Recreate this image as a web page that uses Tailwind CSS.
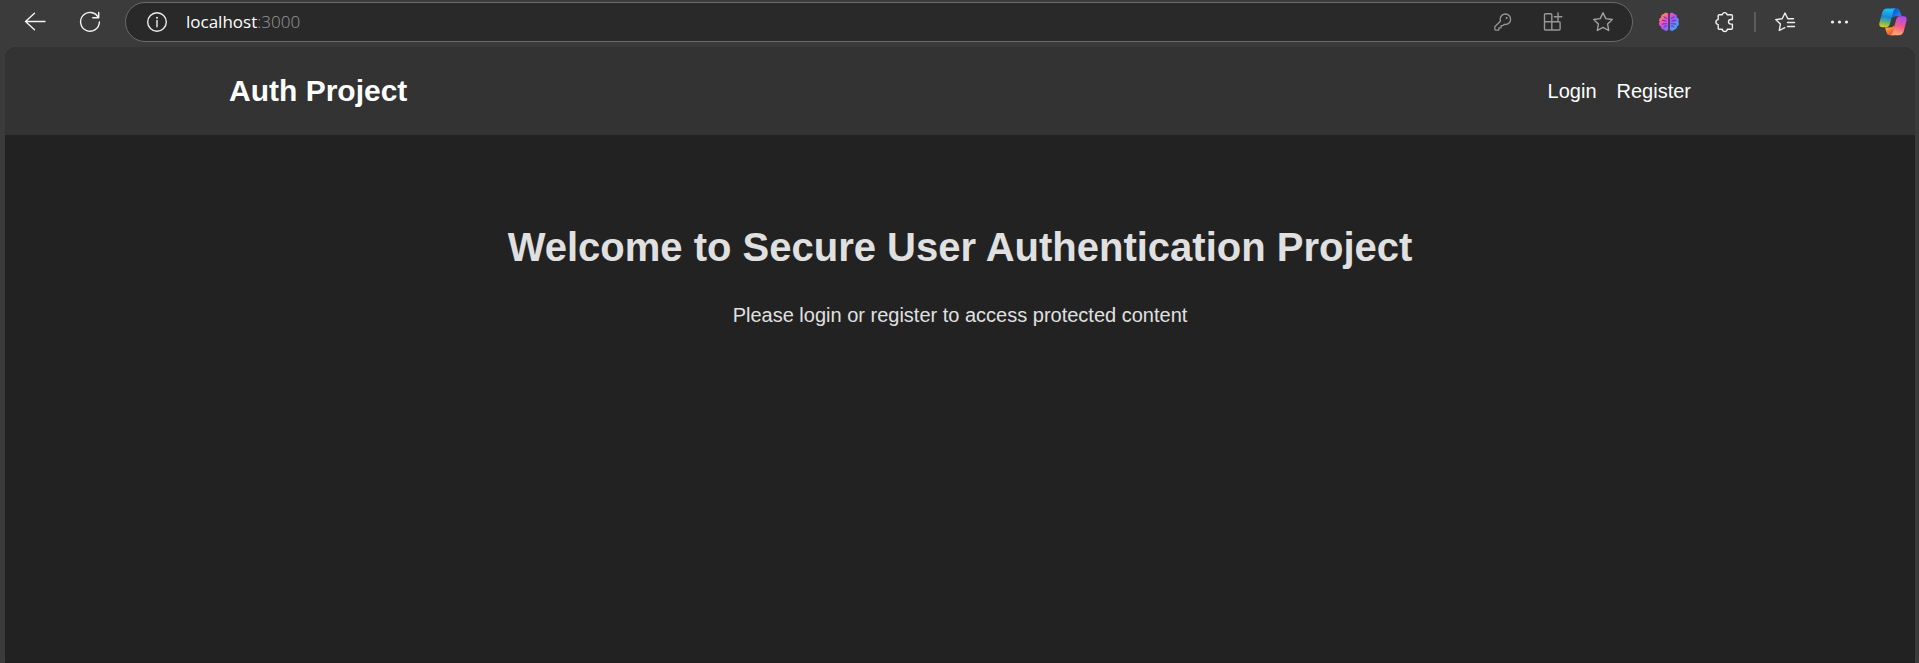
<!DOCTYPE html>
<html lang="en">
<head>
<meta charset="utf-8">
<title>Auth Project</title>
<script src="https://cdn.jsdelivr.net/npm/@tailwindcss/browser@4"></script>
</head>
<body class="min-h-screen flex flex-col bg-[#3b3b3b] font-['Liberation_Sans',Arial,sans-serif] text-xl text-white">
  <div class="flex h-[47px] items-start pt-[2px] pl-[15px] pr-[6px]" role="toolbar" aria-label="Browser">
    <button aria-label="Back" class="flex size-10 items-center justify-center">
      <svg width="24" height="24" viewBox="0 0 24 24" fill="none" stroke="#f4f4f4" stroke-width="1.4" stroke-linecap="round" stroke-linejoin="round"><path d="M22 11.5H2.5M11.5 3.2 2.5 11.5l9 8.3"/></svg>
    </button>
    <button aria-label="Reload" class="ml-[15px] flex size-10 items-center justify-center">
      <svg width="24" height="24" viewBox="0 0 24 24" fill="none" stroke="#f4f4f4" stroke-width="1.4" stroke-linecap="round" stroke-linejoin="round"><path d="M20.2 7.2A9.4 9.4 0 1 0 21.4 12M20.7 2.5v5.2h-5.9"/></svg>
    </button>
    <div class="ml-[15px] flex h-10 min-w-0 flex-1 items-center rounded-full border border-[#6b6b6b] bg-[#292929] pl-[11px] pr-[9px]">
      <button aria-label="Site information" class="flex size-10 shrink-0 items-center justify-center">
        <svg width="22" height="22" viewBox="0 0 22 22" fill="none" stroke="#ededed" stroke-width="1.4"><circle cx="11" cy="11" r="9.3"/><path d="M11 9.5v6.2" stroke-linecap="round"/><circle cx="11" cy="6.8" r="1" fill="#ededed" stroke="none"/></svg>
      </button>
      <a href="#" class="ml-[9px] flex-1 font-['Open_Sans',sans-serif] text-[17px] leading-6 tracking-normal">localhost<span class="font-light text-[#9a9a9a]">:3000</span></a>
      <div class="flex gap-[10px]">
        <button aria-label="Passwords" class="flex size-10 items-center justify-center">
          <svg width="20" height="20" viewBox="0 0 20 20" fill="none" stroke="#979797" stroke-width="1.3" stroke-linejoin="round"><path d="M12.4 2C9.500 2 7.200 4.300 7.200 7.100c0 .7.100 1.300.400 1.900L2.300 14.300c-.3.300-.5.700-.5 1.100v1.900c0 .5.300.8.800.8h2.600c.4 0 .7-.3.700-.7v-1.500h1.500c.4 0 .7-.3.700-.7v-1.500h1.400c.3 0 .500-.100.700-.3l.9-1c.4.100.8.100 1.300.100 2.900 0 5.200-2.300 5.200-5.200S15.300 2 12.400 2Z"/><circle cx="13.700" cy="6" r="1" fill="#979797" stroke="none"/></svg>
        </button>
        <button aria-label="Install app" class="flex size-10 items-center justify-center">
          <svg width="22" height="22" viewBox="0 0 22 22" fill="none" stroke="#979797" stroke-width="1.4" stroke-linejoin="round" stroke-linecap="round"><path d="M3.500 2.700h5.300c.6 0 1 .4 1 1v7h7.300c.6 0 1 .4 1 1v6.300c0 .6-.4 1-1 1H3.500c-.6 0-1-.4-1-1V3.700c0-.6.4-1 1-1ZM2.500 10.700h7.300V19M16 2v7.500M12.300 5.700h7.500"/></svg>
        </button>
        <button aria-label="Add to favorites" class="flex size-10 items-center justify-center">
          <svg width="22" height="22" viewBox="0 0 22 22" fill="none" stroke="#a2a2a2" stroke-width="1.4" stroke-linejoin="round"><path d="M11 1.700 13.800 7.600l6.500.9-4.700 4.500 1.100 6.500L11 16.400l-5.700 3.100 1.100-6.500L1.700 8.500l6.500-.9Z"/></svg>
        </button>
      </div>
    </div>
    <button aria-label="Brain extension" class="ml-4 flex size-10 items-center justify-center">
      <svg width="22" height="22" viewBox="0 0 22 22" fill="none">
        <defs><linearGradient id="brain" x1="3" y1="3" x2="19" y2="18" gradientUnits="userSpaceOnUse"><stop stop-color="#ffa03c"/><stop offset=".12" stop-color="#ff7d6a"/><stop offset=".32" stop-color="#f04bd8"/><stop offset=".58" stop-color="#9a5cff"/><stop offset="1" stop-color="#2eb5ff"/></linearGradient></defs>
        <path fill="url(#brain)" d="M10.200 3v15.500c-.8 1.600-3.400 1.700-4.400-.1-1.700 0-2.900-1.200-2.700-2.900-1.800-.6-2.700-2.700-1.500-4.500C.6 9 1.300 7 3.100 6.400 3 4.500 4.100 3.200 5.900 3 6.800 1.200 9.400 1.300 10.200 3ZM11.800 3v15.500c.8 1.600 3.400 1.700 4.400-.1 1.700 0 2.900-1.200 2.700-2.900 1.800-.6 2.700-2.700 1.500-4.500 1-2 .3-4-1.500-4.600.1-1.900-1-3.200-2.800-3.400C15.200 1.200 12.600 1.300 11.800 3Z"/>
        <path stroke="#49377c" stroke-width=".9" stroke-linecap="round" d="M6 5.500c.3 1.200 1.100 1.700 2.500 1.700M4.200 9.200c1.500 0 2 .8 3.700.8M4.200 13.200c1.700-1 2.600.1 4.100-.5M6 16.200c.2-1 1-1.300 2.400-1.300M16 5.500c-.3 1.200-1.100 1.700-2.500 1.700M17.800 9.200c-1.500 0-2 .8-3.700.8M17.800 13.200c-1.700-1-2.600.1-4.100-.5M16 16.200c-.2-1-1-1.300-2.400-1.300"/>
      </svg>
    </button>
    <button aria-label="Extensions" class="ml-4 flex size-10 items-center justify-center">
      <svg width="22" height="22" viewBox="0 0 22 22" fill="none" stroke="#f0f0f0" stroke-width="1.400" stroke-linejoin="round"><path d="M5.200 3.700h3.100c.2-1.300 1.100-2.100 2.400-2.100s2.200.8 2.400 2.100h4.300c.6 0 1 .4 1 1v3.800h-1.500c-1.400 0-2.400 1-2.400 2.300s1 2.300 2.400 2.300h1.500v4.200c0 .6-.4 1-1 1h-4.100c-.2 1.300-1.200 2.200-2.500 2.200s-2.300-.9-2.500-2.200H5.200c-.6 0-1-.4-1-1v-3.700c-1.400-.2-2.300-1.200-2.300-2.500s.9-2.300 2.300-2.500V4.700c0-.6.4-1 1-1Z"/></svg>
    </button>
    <div class="mt-[10px] ml-[9px] h-5 w-[2px] bg-[#5b5b5b]"></div>
    <button aria-label="Favorites" class="ml-[9px] flex size-10 items-center justify-center">
      <svg width="22" height="22" viewBox="0 0 22 22" fill="none" stroke="#f0f0f0" stroke-width="1.400" stroke-linejoin="round" stroke-linecap="round"><path d="M19.500 7.700h-5.700L11 2 8.200 7.700l-6.500.9 4.700 4.400-1.100 6.500L10.800 16.700M13.500 11.500h7M13.500 15.500h7" /></svg>
    </button>
    <button aria-label="More" class="ml-[15px] flex size-10 items-center justify-center">
      <svg width="20" height="20" viewBox="0 0 20 20" fill="#f0f0f0"><circle cx="2.500" cy="10" r="1.600"/><circle cx="9.500" cy="10" r="1.600"/><circle cx="16.500" cy="10" r="1.600"/></svg>
    </button>
    <button aria-label="Copilot" class="ml-[13px] flex size-10 items-center justify-center">
      <svg width="28" height="28" viewBox="0 0 28 28" fill="none">
        <defs>
          <linearGradient id="leftRibbon" x1="9" y1="2" x2="6" y2="20" gradientUnits="userSpaceOnUse"><stop stop-color="#20b8f4"/><stop offset=".4" stop-color="#1688d8"/><stop offset=".7" stop-color="#65b66b"/><stop offset="1" stop-color="#f2cf0b"/></linearGradient>
          <linearGradient id="rightRibbon" x1="22" y1="9" x2="17" y2="26" gradientUnits="userSpaceOnUse"><stop stop-color="#b04df0"/><stop offset=".5" stop-color="#f2588c"/><stop offset="1" stop-color="#ffa36b"/></linearGradient>
          <linearGradient id="topFold" x1="14" y1="2" x2="21" y2="9" gradientUnits="userSpaceOnUse"><stop stop-color="#1555cf"/><stop offset="1" stop-color="#2588ee"/></linearGradient>
          <linearGradient id="bottomFold" x1="8" y1="19" x2="13" y2="26" gradientUnits="userSpaceOnUse"><stop stop-color="#ffae37"/><stop offset="1" stop-color="#ef4b3c"/></linearGradient>
        </defs>
        <path fill="url(#topFold)" d="M12 .6h5.500c1.900 0 3 1 3.500 2.600l1.600 5h-5.100c-2 0-3.600.6-4.200 2.200Z"/>
        <path fill="url(#bottomFold)" d="M16 27.200h-5c-1.900 0-3-1-3.500-2.600L6 19.400h4.500c2 0 4-.6 4.600-2.200Z"/>
        <path fill="url(#leftRibbon)" d="M8 .6h9c-1.600.3-2.300 1.500-2.800 3.200l-3.400 12.400c-.6 2-1.700 3-3.800 3H3.500C.8 19.200-.1 17.300.4 15.100L3.300 4.300C4 2 5.500.6 8 .6Z"/>
        <path fill="url(#rightRibbon)" d="M20 27.200h-9c1.600-.3 2.300-1.500 2.800-3.200l3.400-12.400c.6-2 1.700-3.400 3.800-3.400h3.500c2.700 0 3.600 1.900 3.100 4.100l-2.900 11.200c-.7 2.300-2.200 3.700-4.700 3.700Z"/>
      </svg>
    </button>
  </div>

  <div class="mr-1 ml-[5px] flex flex-1 flex-col overflow-hidden rounded-t-xl border-b border-[#1e1c1d] bg-[#222222]">
    <header class="flex h-[88px] items-center bg-[#333333]">
      <nav class="mx-auto flex w-full max-w-[1462px] items-center justify-between">
        <a href="#" class="text-[30px] leading-10 font-bold">Auth Project</a>
        <div class="flex gap-5 leading-[30px]">
          <a href="#">Login</a>
          <a href="#">Register</a>
        </div>
      </nav>
    </header>
    <main class="pt-[82px] text-center text-[#e0e0e0]">
      <h1 class="text-[40px] leading-[60px] font-bold">Welcome to Secure User Authentication Project</h1>
      <p class="mt-[23px] leading-[30px]">Please login or register to access protected content</p>
    </main>
  </div>
</body>
</html>
